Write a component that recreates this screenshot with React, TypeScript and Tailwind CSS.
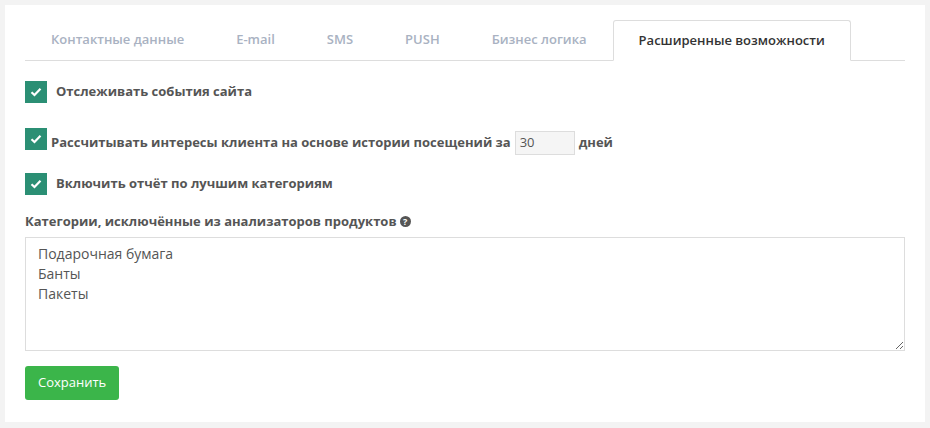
import React from "react";

const Check = () => (
  <span className="flex h-[22px] w-[22px] shrink-0 items-center justify-center bg-[#2b8f74]">
    <svg width="12" height="10" viewBox="0 0 12 10"><path d="M1.5 5.2L4.5 8L10.5 1.8" stroke="white" strokeWidth="2.2" fill="none" /></svg>
  </span>
);

export default function App() {
  const tabs = ["Контактные данные", "E-mail", "SMS", "PUSH", "Бизнес логика"];
  return (
    <div className="min-h-[428px] bg-[#f3f3f3] p-[5px] text-[13px] text-[#555]" style={{ fontFamily: '"Open Sans", sans-serif' }}>
      <div className="h-[417px] w-[920px] bg-white px-5 pt-[15px]">
        <div className="flex h-[41px] border-b border-[#ddd]">
          {tabs.map((t) => (
            <div key={t} className="flex items-center px-[26px] font-semibold text-[#a9b2c2]">{t}</div>
          ))}
          <div className="mb-[-1px] flex items-center rounded-t-[3px] border border-b-white border-[#ddd] bg-white px-[25px] font-semibold text-[#333]">Расширенные возможности</div>
        </div>
        <div className="mt-[20px] flex items-center gap-[9px] font-bold"><Check />Отслеживать события сайта</div>
        <div className="mt-[25px] flex items-start gap-[4px] font-bold">
          <Check />
          <span className="mt-[3px] flex items-center">Рассчитывать интересы клиента на основе истории посещений за
            <span className="mx-[4px] flex h-[24px] w-[60px] items-center border border-[#ddd] bg-[#f5f5f5] px-[4px] font-normal text-[#555]">30</span>дней</span>
        </div>
        <div className="mt-[18px] flex items-center gap-[9px] font-bold"><Check />Включить отчёт по лучшим категориям</div>
        <div className="mt-[17px] flex items-center gap-[3px] font-bold">Категории, исключённые из анализаторов продуктов
          <span className="flex h-[11px] w-[11px] items-center justify-center rounded-full bg-[#555] text-[9px] font-bold text-white">?</span>
        </div>
        <textarea className="mt-[5px] block h-[114px] w-full border border-[#ddd] px-3 py-[6px] text-[14px] leading-[20px] text-[#555] outline-none" defaultValue={"Подарочная бумага\nБанты\nПакеты"} />
        <button className="mt-[15px] h-[34px] rounded-[3px] bg-[#3bb54a] px-[13px] text-[13px] text-white">Сохранить</button>
      </div>
    </div>
  );
}
